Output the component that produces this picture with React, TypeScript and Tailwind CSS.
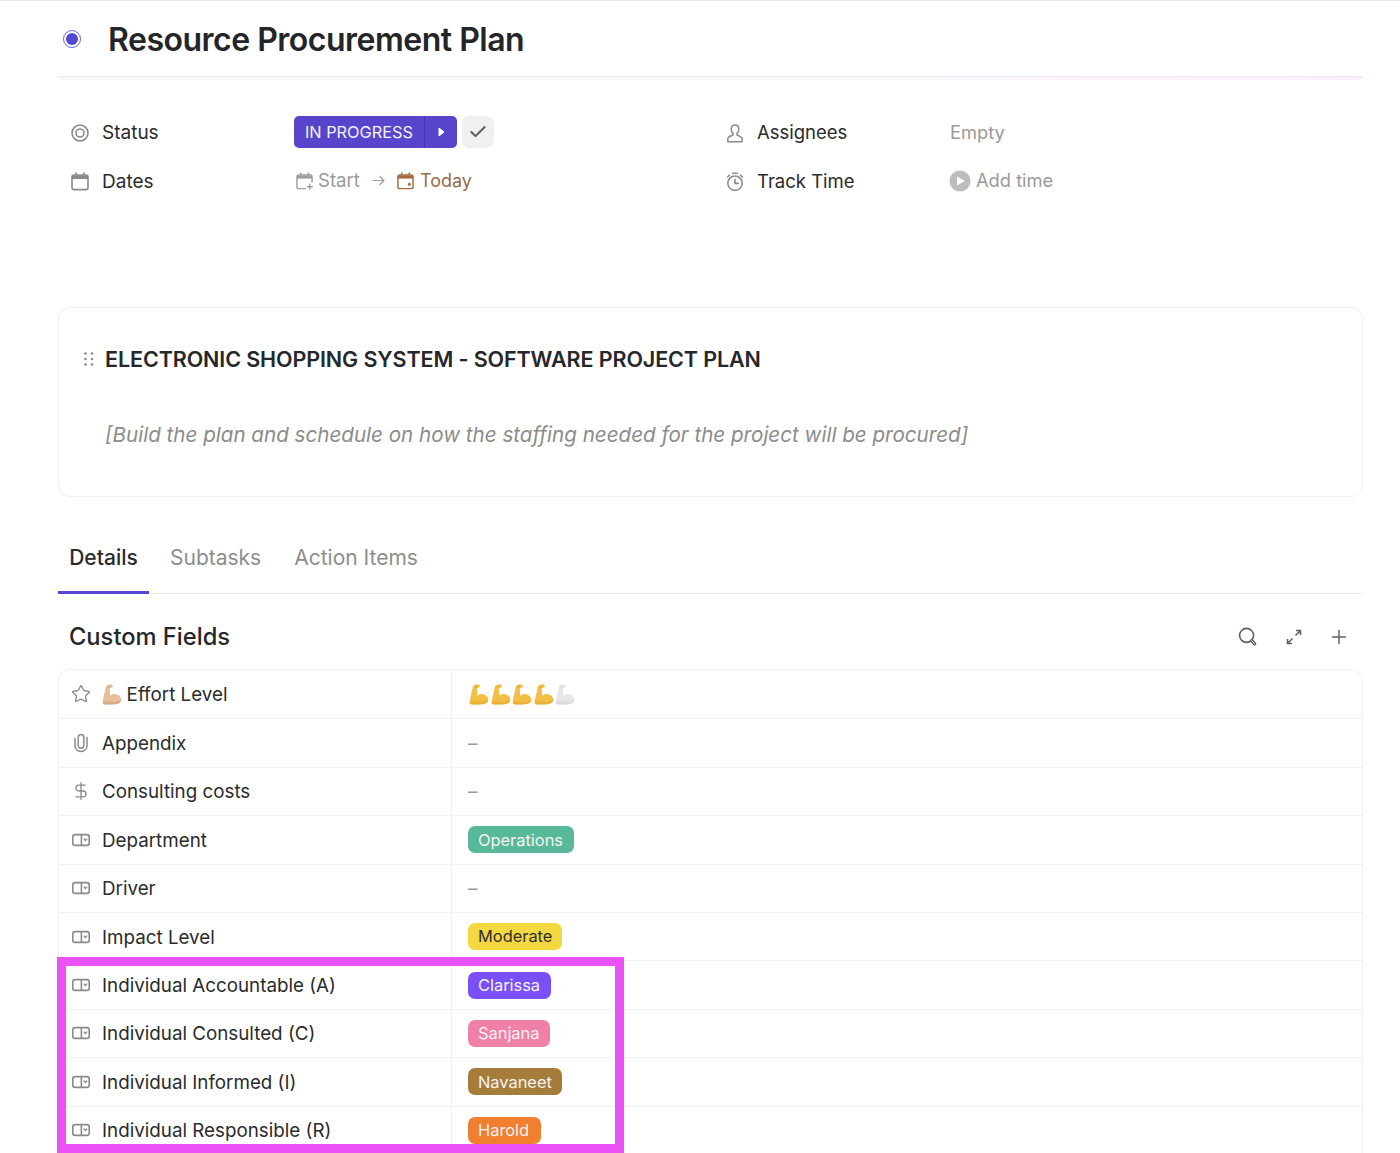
import React from "react";
import { Check, DollarSign, Plus, Star } from "lucide-react";

const G = "#8a8a8a";

function Target() {
  return (
    <svg width="18" height="18" viewBox="0 0 18 18" fill="none" stroke={G} strokeWidth="1.6">
      <circle cx="9" cy="9" r="8" />
      <circle cx="9" cy="9" r="4" />
    </svg>
  );
}
function Cal({ color = G, size = 18, plus = false, dot = false, sw = 1.6 }: { color?: string; size?: number; plus?: boolean; dot?: boolean; sw?: number }) {
  return (
    <svg width={size} height={size + 1} viewBox="0 0 18 19" fill="none" stroke={color} strokeWidth={sw} strokeLinecap="round">
      <path d={plus ? "M10 17.6H3A2 2 0 0 1 1 15.6V5A2 2 0 0 1 3 3H15A2 2 0 0 1 17 5V10.5" : "M3 3H15A2 2 0 0 1 17 5V15.6A2 2 0 0 1 15 17.6H3A2 2 0 0 1 1 15.6V5A2 2 0 0 1 3 3Z"} />
      <path d="M1 5.2H17" strokeWidth={sw + 2} strokeLinecap="butt" />
      <path d="M5 1V3M13 1V3" />
      {plus && <path d="M14.6 13V18M12.1 15.5H17.1" />}
      {dot && <circle cx="13" cy="13" r="0.9" fill={color} />}
    </svg>
  );
}
function UserIcon() {
  return (
    <svg width="18" height="19" viewBox="0 0 18 19" fill="none" stroke={G} strokeWidth="1.5" strokeLinejoin="round">
      <path d="M9 1C6.6 1 5.2 2.8 5.2 5.2C5.2 7 6 8.4 7 9.4V11L3.2 12.8C2.2 13.3 1.8 14 1.8 15V17.8H16.2V15C16.2 14 15.8 13.3 14.8 12.8L11 11V9.4C12 8.4 12.8 7 12.8 5.2C12.8 2.8 11.4 1 9 1Z" />
    </svg>
  );
}
function TimerIcon() {
  return (
    <svg width="18" height="20" viewBox="0 0 18 20" fill="none" stroke={G} strokeWidth="1.6" strokeLinecap="round">
      <circle cx="9" cy="11.2" r="7.2" />
      <path d="M9 7.4V11.4H12.2M6.8 1.2H11.2M1.6 5L3.4 3.2M16.4 5L14.6 3.2" />
    </svg>
  );
}
function PlayBadge() {
  return (
    <svg width="22" height="22" viewBox="0 0 22 22">
      <circle cx="11" cy="11" r="10.5" fill="#bdbdbd" />
      <path d="M8 6.5L16 11L8 15.5Z" fill="#fff" strokeLinejoin="round" />
    </svg>
  );
}
function Drag() {
  return (
    <svg width="10" height="14" viewBox="0 0 10 14" fill="#8b8b8b">
      {[1.5, 7, 12.5].flatMap((y) => [1.5, 8].map((x) => <circle key={`${x}-${y}`} cx={x} cy={y} r="1.3" />))}
    </svg>
  );
}
function Clip() {
  return (
    <svg width="18" height="20" viewBox="0 0 18 20" fill="none" stroke={G} strokeWidth="1.5" strokeLinecap="round">
      <path d="M3 5.5V12.5C3 16 5.6 18.4 9 18.4C12.4 18.4 15 16 15 12.5V4.6" />
      <path d="M6.2 5V12.5C6.2 14.2 7.4 15.2 9 15.2C10.6 15.2 11.8 14.2 11.8 12.5V4.2C11.8 2.6 10.8 1.6 9 1.6C7.4 1.6 6.2 2.8 6.2 4.4" />
    </svg>
  );
}
function Dropdown() {
  return (
    <svg width="18" height="14" viewBox="0 0 18 14" fill="none" stroke={G} strokeWidth="1.6" strokeLinecap="round" strokeLinejoin="round">
      <rect x="0.8" y="1.6" width="16.4" height="10.8" rx="2.4" />
      <path d="M9.4 1.6V12.4" />
      <path d="M12 6L13.4 7.5L14.8 6" strokeWidth="1.2" />
    </svg>
  );
}
function Flex({ fill = "#f2bf44", edge = "#e8a32f" }: { fill?: string; edge?: string }) {
  return (
    <svg className="mr-[1.6px]" width="20" height="21" viewBox="0 0 19 21" preserveAspectRatio="none">
      <path d="M5 1.2C6.5 0.2 9 0 10 1C10.8 2 10 3.6 8.6 3.8L7.4 4.2L7.8 11.8C9.5 10 12.5 9.4 15 10.8C17.6 12.2 18.8 14.6 18.2 16.8C17.4 19.6 14 20.4 10.5 20.4H3C1.2 20.4 0.4 19 0.6 17.6L3.6 3C3.8 2 4.2 1.6 5 1.2Z" fill={fill} />
      <path d="M5 17C9 18.8 14 18.4 18.2 16C17.8 19.4 14 20.4 10.5 20.4H3C1.4 20.4 0.6 19.4 0.6 18C2.2 17.8 3.6 17.4 5 17Z" fill={edge} opacity="0.6" />
      <circle cx="6.4" cy="2.6" r="0.9" fill={edge} />
    </svg>
  );
}

function Tag({ text, bg, dark = false, w }: { text: string; bg: string; dark?: boolean; w: string }) {
  return (
    <span className={`flex h-[27px] items-center rounded-[7px] px-[10px] text-[16.4px] ${bg} ${w} ${dark ? "text-[#2f2f2f]" : "text-[#f7f3f3]"}`}>
      {text}
    </span>
  );
}

type Row = { label: string; icon: React.ReactNode; value: React.ReactNode; labelEmoji?: boolean };
const dash = <span className="pt-[2px] text-[19px] text-[#9a9a9a]">–</span>;
const dd = <Dropdown />;
const rows: Row[] = [
  {
    label: "Effort Level",
    icon: <Star size={20} color={G} strokeWidth={1.6} />,
    labelEmoji: true,
    value: (
      <div className="flex pl-[1px]">
        <Flex /><Flex /><Flex /><Flex /><Flex fill="#e7e7e7" edge="#cfcfcf" />
      </div>
    ),
  },
  { label: "Appendix", icon: <Clip />, value: dash },
  { label: "Consulting costs", icon: <DollarSign size={20} color={G} strokeWidth={1.6} />, value: dash },
  { label: "Department", icon: dd, value: <Tag text="Operations" bg="bg-[#58b99a]" w="w-[106px]" /> },
  { label: "Driver", icon: dd, value: dash },
  { label: "Impact Level", icon: dd, value: <Tag text="Moderate" bg="bg-[#f4d83f]" dark w="w-[94px]" /> },
  { label: "Individual Accountable (A)", icon: dd, value: <Tag text="Clarissa" bg="bg-[#7950f8]" w="w-[83px]" /> },
  { label: "Individual Consulted (C)", icon: dd, value: <Tag text="Sanjana" bg="bg-[#ef81a8]" w="w-[82px]" /> },
  { label: "Individual Informed (I)", icon: dd, value: <Tag text="Navaneet" bg="bg-[#a67c3a]" w="w-[94px]" /> },
  { label: "Individual Responsible (R)", icon: dd, value: <Tag text="Harold" bg="bg-[#f07f30]" w="w-[73px]" /> },
];

export default function App() {
  return (
    <div className="relative h-[1153px] w-[1400px] overflow-hidden border-t border-[#e6e6e6] bg-white font-['Inter',sans-serif] text-[#2a2b2d]">
      <div className="ml-[58px] w-[1305px]">
        {/* Title */}
        <header className="flex h-[76px] items-center border-b border-[#e9ebef]">
          <span className="ml-[5px] flex h-[18px] w-[18px] items-center justify-center rounded-full border-[1.5px] border-[#6d62e8]">
            <span className="h-[12px] w-[12px] rounded-full bg-[#5546d4]" />
          </span>
          <h1 className="ml-[27px] pt-[2px] text-[32px] font-semibold tracking-[-0.5px] text-[#242528]">Resource Procurement Plan</h1>
        </header>
        <div className="h-[3px] rounded-b-[6px] bg-gradient-to-r from-[#f5f7fa] via-[#f8f8fb] to-[#fbeefb]" />

        {/* Properties */}
        <section className="mt-[29px] grid h-[97px] grid-cols-[655px_1fr] grid-rows-2 pl-[13px] text-[19px]">
          <div className="flex items-center">
            <Target />
            <span className="ml-[13px] w-[192px]">Status</span>
            <div className="mb-[2px] flex h-[32px] w-[163px] items-center rounded-[5px] bg-[#5746cc] text-[#f4f3fc]">
              <span className="w-[130px] pl-[11px] text-[16.3px]">IN PROGRESS</span>
              <span className="flex h-full flex-1 items-center justify-center border-l border-[#4535ad]">
                <svg width="7" height="10" viewBox="0 0 7 10"><path d="M1 1L6 5L1 9Z" fill="#fff" stroke="#fff" strokeLinejoin="round" /></svg>
              </span>
            </div>
            <span className="mb-[2px] ml-[5px] flex h-[32px] w-[32px] items-center justify-center rounded-[8px] bg-[#f0f0f0]">
              <Check size={20} color="#5c5c5c" strokeWidth={2.4} />
            </span>
          </div>
          <div className="flex items-center text-[18.5px]">
            <UserIcon />
            <span className="ml-[13px] w-[193px]">Assignees</span>
            <span className="mb-[2px] text-[18.3px] text-[#9a9a9a]">Empty</span>
          </div>
          <div className="flex items-center">
            <Cal />
            <span className="ml-[13px] w-[192px]">Dates</span>
            <div className="mb-[2px] ml-[2px] flex items-center">
              <Cal size={17} plus color="#9d9d9d" sw={1.5} />
              <span className="ml-[5px] text-[18.6px] text-[#9a9a9a]">Start</span>
              <svg className="ml-[12px]" width="13" height="11" viewBox="0 0 13 11" fill="none" stroke="#9d9d9d" strokeWidth="1.2" strokeLinecap="round" strokeLinejoin="round"><path d="M1 5.5H12M8 1.5L12 5.5L8 9.5" /></svg>
              <span className="ml-[12px]"><Cal size={17} dot color="#a5693e" sw={1.5} /></span>
              <span className="ml-[6px] text-[18px] text-[#9a6b48]">Today</span>
            </div>
          </div>
          <div className="flex items-center text-[18.5px]">
            <TimerIcon />
            <span className="ml-[13px] w-[192px]">Track Time</span>
            <div className="mb-[2px] flex items-center">
              <PlayBadge />
              <span className="ml-[5px] text-[18.3px] text-[#9a9a9a]">Add time</span>
            </div>
          </div>
        </section>

        {/* Card */}
        <section className="mt-[101px] h-[190px] rounded-[12px] border border-[#f0f0f0] pl-[25px]">
          <div className="mt-[38px] flex items-center">
            <Drag />
            <h2 className="ml-[11px] text-[21.5px] leading-[26px] font-semibold tracking-[-0.1px] text-[#26272a]">
              ELECTRONIC SHOPPING SYSTEM - SOFTWARE PROJECT PLAN
            </h2>
          </div>
          <p className="mt-[50px] ml-[21px] text-[20.6px] leading-[26px] text-[#8c8c8c] italic">
            [Build the plan and schedule on how the staffing needed for the project will be procured]
          </p>
        </section>

        {/* Tabs */}
        <nav className="mt-[34px] flex h-[63px] border-b border-[#ececec] text-[21px]">
          <span className="-mb-px flex w-[91px] items-center justify-center border-b-[3px] border-[#5546d4] pb-[6px] font-medium text-[#2a2b2d]">Details</span>
          <span className="ml-[21px] flex items-center pb-[9px] text-[#8d8d8d]">Subtasks</span>
          <span className="ml-[33px] flex items-center pb-[9px] text-[#8d8d8d]">Action Items</span>
        </nav>

        {/* Custom fields heading */}
        <div className="flex h-[75px] items-center pt-[10px] pr-[13px] pl-[11px]">
          <h3 className="flex-1 text-[23.7px] font-medium text-[#26272a]">Custom Fields</h3>
          <svg width="20" height="20" viewBox="0 0 20 20" fill="none" stroke="#5f5f5f" strokeWidth="1.6">
            <circle cx="8.6" cy="8.4" r="7" />
            <path d="M13.8 13.6L16.6 16.8" strokeWidth="3.4" strokeLinecap="round" />
            <path d="M13.8 13.6L16.6 16.8" stroke="#fff" strokeWidth="0.9" strokeLinecap="round" />
          </svg>
          <svg className="ml-[28px]" width="16" height="16" viewBox="0 0 16 16" fill="none" stroke="#5f5f5f" strokeWidth="1.5">
            <path d="M9.5 6.5L14.5 1.5M10 1.5H14.5V6" />
            <path d="M6.5 9.5L1.5 14.5M1.5 10V14.5H6" />
          </svg>
          <span className="ml-[26px]"><Plus size={22} color="#5f5f5f" strokeWidth={1.6} /></span>
        </div>

        {/* Table */}
        <section className="h-[520px] rounded-t-[12px] border border-[#f0f0f0]">
          {rows.map((r, i) => (
            <div key={r.label} className={`flex h-[48.4px] text-[18.8px] ${i ? "border-t border-[#f0f0f0]" : ""}`}>
              <div className="flex w-[393px] items-center border-r border-[#f0f0f0]">
                <span className="flex w-[43px] shrink-0 items-center justify-center">{r.icon}</span>
                {r.labelEmoji && <span className="mr-[3px] flex"><Flex fill="#e6bf98" edge="#d29d70" /></span>}
                <span className="truncate pt-[2px]">{r.label}</span>
              </div>
              <div className="flex flex-1 items-center pl-[16px]">{r.value}</div>
            </div>
          ))}
        </section>
      </div>

      {/* Highlight annotation */}
      <div className="pointer-events-none absolute top-[956px] left-[57px] h-[196px] w-[567px] border-[9px] border-[#ea52f5]" />
    </div>
  );
}
